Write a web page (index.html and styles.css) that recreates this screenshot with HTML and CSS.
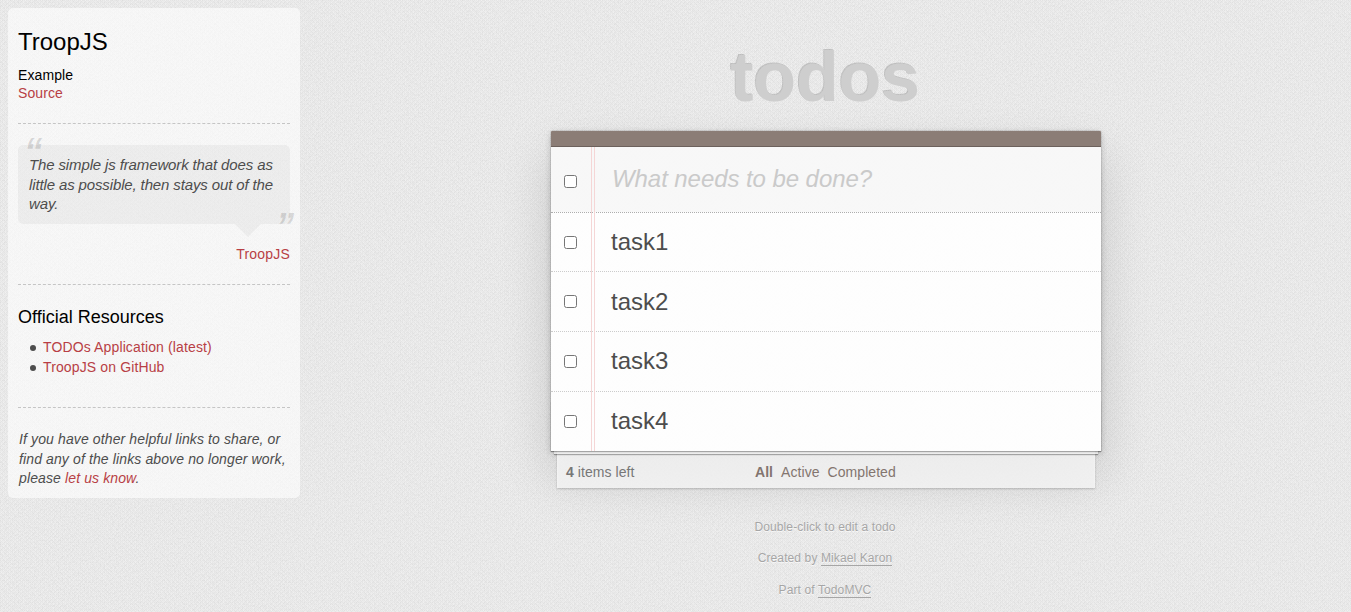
FILE: index.html
```html
<!DOCTYPE html>
<html lang="en">
<head>
<meta charset="utf-8">
<title>TroopJS • TodoMVC</title>
<link rel="stylesheet" href="styles.css">
</head>
<body>
<aside class="learn">
  <h3>TroopJS</h3>
  <h5>Example</h5>
  <a href="#">Source</a>
  <hr>
  <blockquote class="quote">
    <p>The simple js framework that does as little as possible, then stays out of the way.</p>
    <footer><a href="#">TroopJS</a></footer>
  </blockquote>
  <hr>
  <h4>Official Resources</h4>
  <ul>
    <li><a href="#">TODOs Application (latest)</a></li>
    <li><a href="#">TroopJS on GitHub</a></li>
  </ul>
  <hr>
  <p class="note">If you have other helpful links to share, or find any of the links above no longer work, please <a href="#">let us know</a>.</p>
</aside>
<main class="page">
  <h1>todos</h1>
  <section class="todoapp">
    <div class="bar"></div>
    <div class="entry"><input type="checkbox" class="check"><input class="new-todo" placeholder="What needs to be done?"></div>
    <ul class="list">
      <li><input type="checkbox" class="check"><label>task1</label></li>
      <li><input type="checkbox" class="check"><label>task2</label></li>
      <li><input type="checkbox" class="check"><label>task3</label></li>
      <li><input type="checkbox" class="check"><label>task4</label></li>
    </ul>
    <footer class="status">
      <span class="count"><strong>4</strong> items left</span>
      <nav class="filters"><a class="selected">All</a><a>Active</a><a>Completed</a></nav>
    </footer>
  </section>
  <div class="info">
    <p>Double-click to edit a todo</p>
    <p>Created by <a>Mikael Karon</a></p>
    <p>Part of <a>TodoMVC</a></p>
  </div>
</main>
</body>
</html>
```
FILE: styles.css
```css
* { box-sizing: border-box; }
html, body { margin: 0; padding: 0; }
body {
  display: flex;
  align-items: flex-start;
  height: 612px;
  overflow: hidden;
  font: 14px/19.6px "Liberation Sans", Arial, sans-serif;
  color: #4d4d4d;
  background-color: #ededed;
  background-image: url("data:image/svg+xml,%3Csvg xmlns='http://www.w3.org/2000/svg' width='200' height='200'%3E%3Cdefs%3E%3Cpattern id='w' width='4' height='4' patternUnits='userSpaceOnUse'%3E%3Cpath fill='%23000' fill-opacity='.03' d='M0 0h1v1H0zM2 0h1v1H2zM1 1h1v1H1zM0 2h1v1H0zM2 2h1v1H2zM3 3h1v1H3z'/%3E%3Cpath fill='%23fff' fill-opacity='.2' d='M1 0h1v1H1zM3 2h1v1H3z'/%3E%3C/pattern%3E%3Cfilter id='n'%3E%3CfeTurbulence type='fractalNoise' baseFrequency='.55' numOctaves='2' stitchTiles='stitch'/%3E%3CfeColorMatrix values='0 0 0 0 0 0 0 0 0 0 0 0 0 0 0 .09 0 0 0 -.035'/%3E%3C/filter%3E%3C/defs%3E%3Crect width='200' height='200' fill='url(%23w)'/%3E%3Crect width='200' height='200' filter='url(%23n)'/%3E%3C/svg%3E");
}
h3, h4, h5, p, ul, blockquote { margin: 0; padding: 0; font-weight: normal; }
.learn {
  flex: none;
  width: 292px;
  height: 490px;
  margin: 8px 0 0 8px;
  padding: 10px;
  border-radius: 5px;
  background: rgba(255,255,255,.6);
}
.learn a { color: #b83f45; text-decoration: none; }
.learn h3 { margin-top: 10px; font-size: 24px; line-height: 28px; color: #000; }
.learn h5 { margin-top: 10px; font-size: 14px; line-height: 18px; color: #000; letter-spacing: .1px; }
.learn > a { display: block; line-height: 18px; letter-spacing: .1px; }
.learn hr { margin: 21px 0; border: 0; border-top: 1px dashed #c5c5c5; }
.quote { position: relative; }
.quote p {
  position: relative;
  padding: 10px 5px 10px 11px;
  border-radius: 5px;
  background: rgba(0,0,0,.04);
  font-size: 15px;
  font-style: italic;
  letter-spacing: -.13px;
}
.quote p::before, .quote p::after {
  position: absolute;
  font-size: 37px;
  font-weight: bold;
  line-height: 50px;
  color: rgba(0,0,0,.12);
}
.quote p::before { content: "“"; top: -18px; left: 6px; }
.quote p::after { content: "”"; top: 57px; right: -4px; }
.quote footer { position: relative; height: 39.6px; padding-top: 21px; text-align: right; letter-spacing: .2px; }
.quote footer::before {
  content: "";
  position: absolute;
  top: 0;
  right: 29px;
  border: 13px solid transparent;
  border-bottom: 0;
  border-top-color: rgba(0,0,0,.04);
}
.learn h4 { font-size: 18px; line-height: 22px; color: #000; }
.learn ul { margin: 9px 0 30px; padding-left: 25px; line-height: 20px; list-style: none; letter-spacing: .13px; }
.learn li { position: relative; }
.learn li::before {
  content: "";
  position: absolute;
  left: -13px;
  top: 8px;
  width: 6px;
  height: 6px;
  border-radius: 50%;
  background: #4d4d4d;
}
.note { margin-right: -5px; padding: 1px 5px 0 1px; font-style: italic; line-height: 19.5px; letter-spacing: .12px; }
.page { width: 550px; margin-left: 251px; padding-top: 36px; }
h1 {
  margin: 0;
  height: 95px;
  padding-right: 2px;
  font-size: 70px;
  line-height: 82px;
  text-align: center;
  letter-spacing: -.2px;
  color: #cecece;
  text-shadow: -1px -1px 0 rgba(0,0,0,.17);
}
.todoapp {
  position: relative;
  height: 320px;
  background: rgba(255,255,255,.92);
  border-radius: 2px 2px 0 0;
  box-shadow: 0 0 0 1px rgba(0,0,0,.08), 0 2px 6px rgba(0,0,0,.2), 0 25px 50px rgba(0,0,0,.15);
}
.todoapp::before {
  content: "";
  position: absolute;
  top: 16px;
  bottom: 0;
  left: 40px;
  width: 2px;
  border: solid #f5d6d6;
  border-width: 0 1px;
}
.bar { height: 16px; background: #8b7d76; border-bottom: 1px solid #6c615c; border-radius: 1px 1px 0 0; }
.entry { display: flex; align-items: center; height: 65px; background: rgba(0,0,0,.025); }
.check { flex: none; width: 13px; height: 13px; margin: 3px 0 0 13px; }
.new-todo {
  flex: 1;
  height: 65px;
  margin: 0 0 0 35px;
  padding: 0 0 1px;
  border: 0;
  outline: 0;
  background: none;
  font: italic 24px "Liberation Sans", Arial, sans-serif;
  letter-spacing: -.07px;
}
.new-todo::placeholder { color: #cacaca; }
.list { height: 239.4px; margin-top: -.4px; list-style: none; border-top: 1px dotted #adadad; }
.list li { display: flex; align-items: center; height: 59.8px; border-bottom: 1px dotted #ccc; }
.list li:last-child { border: 0; height: 59px; }
.list .check { margin-top: 0; }
.list label { margin: -1.4px 0 0 34px; font-size: 24px; line-height: 29px; }
.status {
  position: relative;
  display: flex;
  height: 20px;
  margin-top: 12px;
  padding: 0 15px;
  color: #777;
  letter-spacing: .06px;
}
/* stacked sheets of paper under the list */
.status::after {
  content: "";
  position: absolute;
  top: -62px;
  left: 0;
  right: 0;
  height: 50px;
  box-shadow: 0 1px 1px rgba(0,0,0,.3), 0 6px 0 -3px rgba(255,255,255,.8), 0 7px 1px -3px rgba(0,0,0,.3), 0 43px 0 -6px rgba(255,255,255,.8), 0 44px 2px -6px rgba(0,0,0,.2);
}
.count, .filters { position: relative; z-index: 1; }
.count { width: 189px; }
.filters { display: flex; gap: 8px; color: #83756f; }
.selected { font-weight: bold; }
.info { margin-top: 66.5px; padding-right: 2px; text-align: center; font-size: 12px; color: #a6a6a6; letter-spacing: .11px; text-shadow: 0 1px 0 rgba(255,255,255,.7); }
.info p { height: 19.6px; margin-bottom: 12px; }
.info a { border-bottom: 1px solid #a6a6a6; }
```
